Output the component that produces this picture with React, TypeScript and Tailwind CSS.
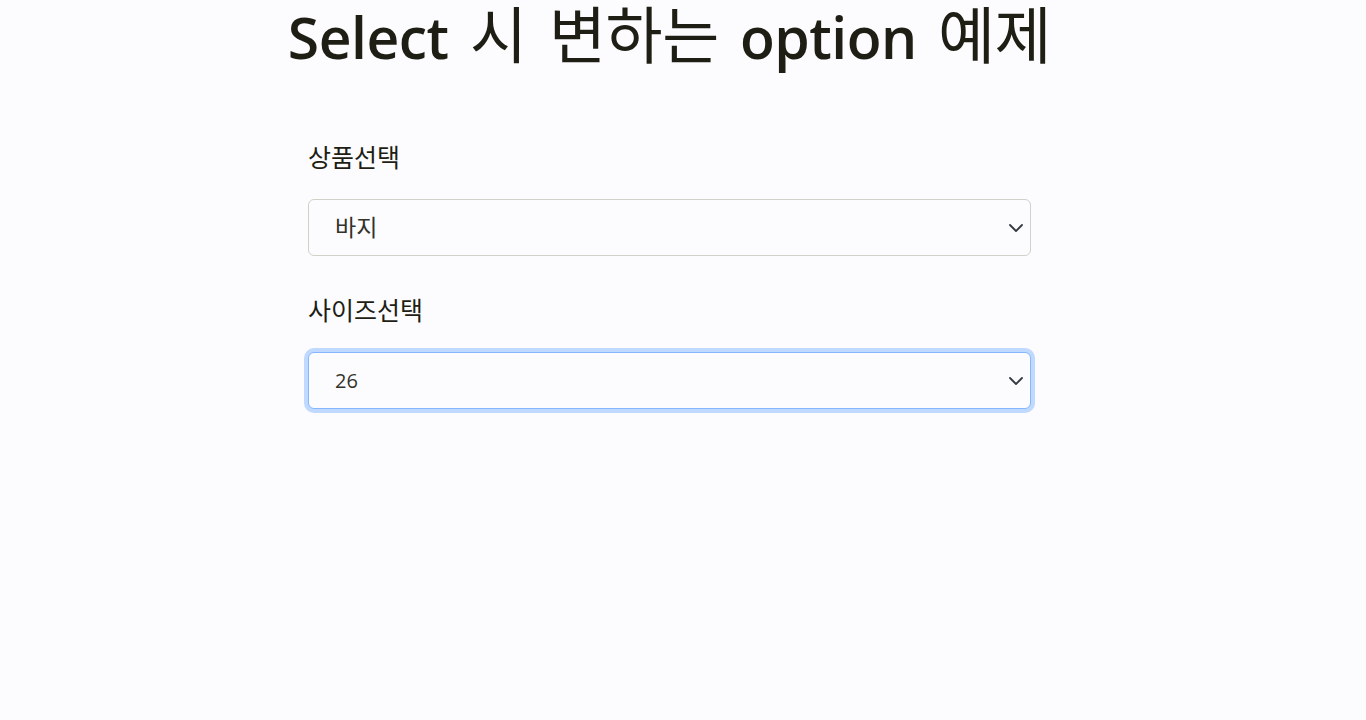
import { useState } from "react";

const sizes: Record<string, string[]> = {
  바지: ["26", "28", "30", "32"],
  셔츠: ["S", "M", "L", "XL"],
};

function Chevron() {
  return (
    <svg
      className="pointer-events-none absolute right-[5px] top-1/2 -translate-y-1/2"
      width="20"
      height="16"
      viewBox="0 0 16 16"
      fill="none"
      stroke="#343a40"
      strokeWidth="1.8"
      strokeLinecap="round"
      strokeLinejoin="round"
    >
      <path d="m2 5 6 6 6-6" />
    </svg>
  );
}

export default function App() {
  const [product, setProduct] = useState("바지");
  const [size, setSize] = useState("26");

  return (
    <div
      className="min-h-screen bg-[#fcfcff] text-[#1e1e14]"
      style={{ fontFamily: '"Open Sans", "Noto Sans CJK KR", sans-serif' }}
    >
      <div className="ml-[296px] w-[747px]">
        {/* Title */}
        <h1 className="-mx-[30px] whitespace-nowrap text-center text-[57px] leading-[70px] font-semibold tracking-[-0.5px] [word-spacing:7px]">
          Select <span className="text-[62px] font-normal">시 변하는</span> option{" "}
          <span className="text-[62px] font-normal">예제</span>
        </h1>

        <div className="mt-[69px] px-3">
          <label className="block text-[25px] leading-[33px]">상품선택</label>
          <div className="relative mt-[25px]">
            <select
              value={product}
              onChange={(e) => {
                setProduct(e.target.value);
                setSize(sizes[e.target.value][0]);
              }}
              className="block h-[57px] w-full appearance-none rounded-[6px] border border-[#cfd2c8] bg-[#fcfcff] pl-[26px] text-[23px] text-[#33332a] outline-none"
            >
              <option>바지</option>
              <option>셔츠</option>
            </select>
            <Chevron />
          </div>

          <label className="mt-[38px] block text-[25px] leading-[33px]">사이즈선택</label>
          <div className="relative mt-[25px]">
            <select
              value={size}
              onChange={(e) => setSize(e.target.value)}
              className="block h-[57px] w-full appearance-none rounded-[6px] border border-[#86b7fe] bg-[#fcfcff] pl-[26px] text-[20px] text-[#33332a] shadow-[0_0_0_4px_rgba(13,110,253,0.25)] outline-none"
            >
              {sizes[product].map((s) => (
                <option key={s}>{s}</option>
              ))}
            </select>
            <Chevron />
          </div>
        </div>
      </div>
    </div>
  );
}
